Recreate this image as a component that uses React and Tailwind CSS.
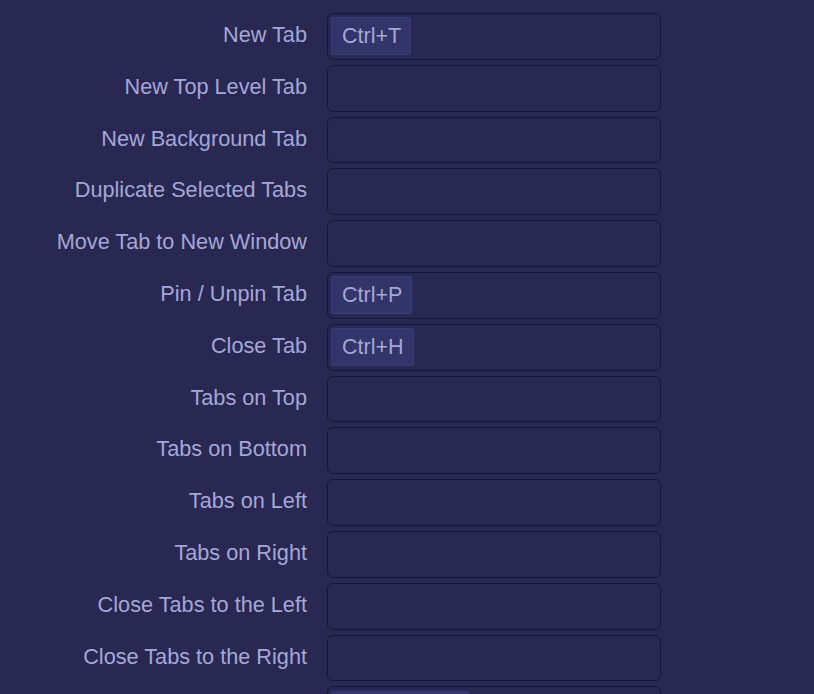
const shortcuts = [
  { label: 'New Tab', keys: 'Ctrl+T' },
  { label: 'New Top Level Tab' },
  { label: 'New Background Tab' },
  { label: 'Duplicate Selected Tabs' },
  { label: 'Move Tab to New Window' },
  { label: 'Pin / Unpin Tab', keys: 'Ctrl+P' },
  { label: 'Close Tab', keys: 'Ctrl+H' },
  { label: 'Tabs on Top' },
  { label: 'Tabs on Bottom' },
  { label: 'Tabs on Left' },
  { label: 'Tabs on Right' },
  { label: 'Close Tabs to the Left' },
  { label: 'Close Tabs to the Right' },
  { label: 'Close Other Tabs', keys: 'Ctrl+Shift+H' },
];

// one row: label on the left, key box on the right
function ShortcutRow({ label, keys }) {
  return (
    <div className="flex items-center h-[46.8px] mb-[5px]">
      <div className="w-[307px] text-right text-[21.7px] leading-none pb-[3px] text-[#a4a7d8] whitespace-nowrap">{label}</div>
      <div className="ml-[20px] w-[334px] h-full flex items-center px-[3px] border border-[#17173a] rounded-[6px] bg-[#282852]">
        {keys && (
          <span className="h-[38px] flex items-center pl-[10px] pr-[9px] bg-[#32346a] border border-[#393b77] rounded-[2px] text-[21.5px] text-[#a4a7d8]">
            {keys}
          </span>
        )}
      </div>
    </div>
  );
}

export default function App() {
  return (
    <div className="bg-[#282852] pt-[13px] overflow-hidden h-[694px]" style={{ fontFamily: '"Liberation Sans", Arial, sans-serif' }}>
      {shortcuts.map((s) => (
        <ShortcutRow key={s.label} label={s.label} keys={s.keys} />
      ))}
    </div>
  );
}
